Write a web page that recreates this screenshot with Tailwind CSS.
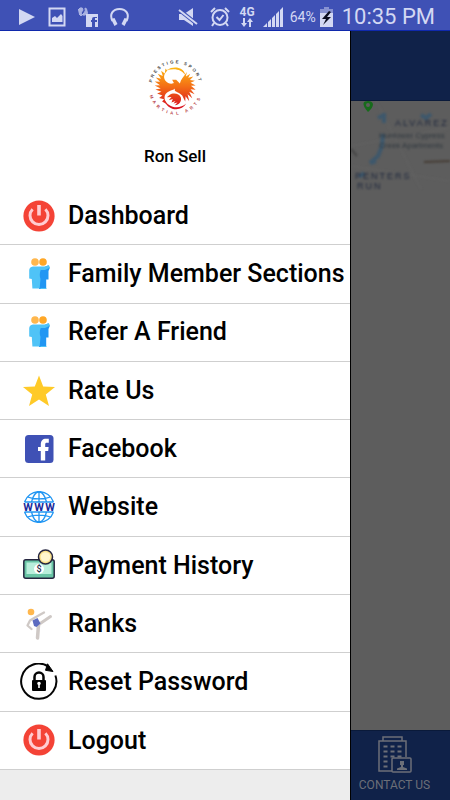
<!DOCTYPE html>
<html lang="en">
<head>
<meta charset="utf-8">
<meta name="viewport" content="width=device-width, initial-scale=1">
<title>Prestige Sport Martial Arts</title>
<script src="https://cdn.jsdelivr.net/npm/@tailwindcss/browser@4"></script>
</head>
<body class="flex h-screen flex-col overflow-hidden bg-white font-['Roboto','Noto_Sans',sans-serif] text-black">

<svg class="hidden" aria-hidden="true">
  <symbol id="power" viewBox="0 0 32 32">
    <circle cx="16" cy="16" r="15.6" fill="#f44336"/>
    <path d="M9.6 9.2A9 9 0 1 0 22.4 9.2" fill="none" stroke="#ffcdd2" stroke-width="3"/>
    <path d="M14.200 5h3.600v10.500h-3.600z" fill="#ffcdd2"/>
  </symbol>
  <symbol id="friends" viewBox="0 0 32 32">
    <circle cx="12" cy="4" r="3.800" fill="#ffb74d"/>
    <circle cx="20" cy="4" r="3.800" fill="#ffa726"/>
    <path d="M16 9h5.500l4-1.800 1.300 2.800-1.300 3v8.500h-2.300v9.500H16z" fill="#2196f3"/>
    <path d="M10 8.500h12l4-1.300.8 2.600-4.800 2.200h-4.300c-1.200 3-1.200 6-.2 9l-.9 9.500H9.400l-.6-9.500-2.600-.5V12.500q0-3.500 3.800-4z" fill="#4fc3f7"/>
    <path d="M17.500 30.500h5.800" stroke="#4fc3f7"/>
  </symbol>
</svg>

<header class="flex h-[31px] shrink-0 items-center border-b border-[#1029ac] bg-[#3f51b5] pt-[3px] pr-[15px] pl-[18px] text-[#d3d8f3]">
  <div class="flex items-center gap-3">
    <svg class="h-[18px] w-[18px]" viewBox="0 0 18 18" fill="currentColor"><path d="M1 1l16 8-16 8z"/></svg>
    <svg class="h-5 w-[18px]" viewBox="0 0 18 20"><path d="M1.500 1.500h15v17h-15z" fill="none" stroke="currentColor" stroke-width="2"/><path d="M4 15v-4l3-2 2 2 4-4 1.500 2v6z" fill="currentColor"/></svg>
    <svg class="h-[22px] w-[20px]" viewBox="0 0 20 22"><path d="M0 4l2-2q3-1 3 2l-2 3q1 3 4 2 4-1 2-4 0-3-2-3 1 3-1 5l-3 3-2-2" fill="#a9b2e2" stroke="#a9b2e2"/><path d="M8 8h12v13h-3v-5h2v-2h-2v-2h2v-1h-3q-2 0-2 2v1h-1v2h1v5H8z" fill="currentColor"/></svg>
    <svg class="h-5 w-[19px]" viewBox="0 0 19 20"><path d="M2.500 14C-1 7 3 2 9.500 2S20 7 16.500 14" fill="none" stroke="currentColor" stroke-width="2"/><path d="M1 12l3.500-1 3 6-3 2zM18 12l-3.500-1-3 6 3 2z" fill="currentColor"/></svg>
  </div>
  <div class="ml-auto flex items-center">
    <svg class="mr-3 h-5 w-5" viewBox="0 0 20 20"><path d="M1 7h5l9-6v18l-9-6H1z" fill="currentColor"/><path d="M0 2l19 15" stroke="#3f51b5" stroke-width="4"/><path d="M1 3l18 14" stroke="currentColor" stroke-width="2"/></svg>
    <svg class="mr-[10px] h-5 w-5" viewBox="0 0 20 20" fill="none" stroke="currentColor" stroke-width="2"><circle cx="10" cy="10.500" r="7.500"/><path d="M6.500 10l3 3 4-5M1 5l4-4M19 5l-4-4M4 16l-2 3M16 16l2 3"/></svg>
    <div class="mr-2 flex flex-col items-center text-xs leading-3 font-bold">
      <span>4G</span>
      <svg class="h-[10px] w-3" viewBox="0 0 12 10" fill="currentColor"><path d="M2 0h2v5h2L3 9 0 5h2zM8 9h2V4h2L9 0 6 4h2z"/></svg>
    </div>
    <svg class="mr-[7px] h-5 w-5" viewBox="0 0 20 20" fill="currentColor"><path d="M0 20l4-4v4zM5 15l3-3v8H5zM9 11l3-3v12H9zM13 7l3-3v16h-3zM17 3l3-3v20h-3z"/></svg>
    <span class="mr-1 text-sm">64%</span>
    <svg class="mr-[9px] h-5 w-[13px]" viewBox="0 0 13 20"><path d="M4 0h5v2h4v5H0V2h4z" fill="#8792d2"/><path d="M0 6h13v14H0z" fill="currentColor"/><path d="M9 4l-7 8h4l-3 6 8-8H7l4-5z" fill="#0a0d20"/></svg>
    <time class="text-[22px] leading-7">10:35 PM</time>
  </div>
</header>

<div class="flex min-h-0 flex-1">
  <aside class="flex w-[350px] shrink-0 flex-col bg-white">
    <div class="flex h-[156px] shrink-0 flex-col items-center pt-[28px]">
      <svg class="h-[57px] w-[57px]" viewBox="5 3 170 170" role="img" aria-label="Prestige Sport Martial Arts">
        <defs>
          <linearGradient id="fire" gradientUnits="userSpaceOnUse" x1="0" y1="28" x2="0" y2="145"><stop offset="0" stop-color="#fdb813"/><stop offset=".5" stop-color="#f36c16"/><stop offset="1" stop-color="#d9131f"/></linearGradient>
          <path id="arcTop" d="M18 88A72 72 0 0 1 162 88"/>
          <path id="arcBottom" d="M9 88A81 81 0 0 0 171 88"/>
        </defs>
        <g class="font-['Liberation_Sans',sans-serif] text-[13px] font-bold tracking-[6px]" text-anchor="middle">
          <text fill="#444"><textPath href="#arcTop" startOffset="50%">PRESTIGE SPORT</textPath></text>
          <text class="tracking-[9px]" fill="#b8434a"><textPath href="#arcBottom" startOffset="50%">MARTIAL ARTS</textPath></text>
        </g>
        <g fill="url(#fire)">
          <path d="M72 34C56 42 52 56 60 68C68 78 80 78 88 74L92 88C84 98 68 96 60 108C54 118 58 130 70 141L50 130L56 123L41 119L51 112L35 106L48 101L30 94L46 91L28 82L44 81L28 70L44 71L31 58L47 62L37 47L52 54L47 38L58 46L60 31L66 38Z"/>
          <path d="M88 80L80 65L92 65L103 76C106 64 114 56 124 42L121 55L134 47L128 59L143 55L133 66L148 68L135 74L150 82L136 83L150 95L135 93L147 108L131 101L140 120L126 108L131 129L120 114L119 130L110 112C100 104 98 104 88 98Z"/>
          <path d="M64 36C86 22 114 28 119 50C108 36 92 29 64 36Z"/>
          <path d="M72 110C84 102 102 106 106 118C109 130 101 140 88 141L96 133L84 136L90 128L78 133L82 122L70 126L78 116L64 117Z"/>
          <path d="M56 122C66 146 98 157 122 136C106 164 62 156 56 122Z"/>
        </g>
      </svg>
      <p class="mt-[30px] text-[17px] leading-5 font-medium">Ron Sell</p>
    </div>

    <nav class="min-h-0 flex-1">
      <ul class="flex h-full flex-col text-[25px] font-medium">
        <li class="flex-1 border-b border-[#cfcfcf]"><a href="#dashboard" class="flex h-full items-center gap-[10px] pl-5">
          <svg class="mx-[3px] h-8 w-8"><use href="#power"/></svg>Dashboard</a></li>
        <li class="flex-1 border-b border-[#cfcfcf]"><a href="#family" class="flex h-full items-center gap-[10px] pl-5 whitespace-nowrap">
          <svg class="mx-[3px] h-8 w-8"><use href="#friends"/></svg>Family Member Sections</a></li>
        <li class="flex-1 border-b border-[#cfcfcf]"><a href="#refer" class="flex h-full items-center gap-[10px] pl-5">
          <svg class="mx-[3px] h-8 w-8"><use href="#friends"/></svg>Refer A Friend</a></li>
        <li class="flex-1 border-b border-[#cfcfcf]"><a href="#rate" class="flex h-full items-center gap-[10px] pl-5">
          <svg class="mx-[3px] h-8 w-8" viewBox="0 0 32 32"><path fill="#ffca28" d="M16 .5l4.200 10.900L32 12l-9.200 7.400L26 31l-10-6.500L6 31l3.200-11.600L0 12l11.800-.6z"/></svg>Rate Us</a></li>
        <li class="flex-1 border-b border-[#cfcfcf]"><a href="#facebook" class="flex h-full items-center gap-[10px] pl-5">
          <svg class="mx-[3px] h-8 w-8" viewBox="0 0 32 32"><rect x="2" y="2" width="28.500" height="28" rx="3.500" fill="#3f51b5"/><path fill="#fff" d="M17.800 27.500V18H15v-4h2.800v-2.500c0-4 2-5.800 5.200-5.800h2.800v4h-2c-1.300 0-1.600.6-1.600 1.900V14h3.400l-.4 4h-3v9.500z"/></svg>Facebook</a></li>
        <li class="flex-1 border-b border-[#cfcfcf]"><a href="#website" class="flex h-full items-center gap-[10px] pl-5">
          <svg class="mx-[3px] h-8 w-8" viewBox="0 0 32 32"><path fill="none" stroke="#2196f3" stroke-width="1.300" d="M1.500 11a15.300 15.300 0 0 1 29 0M1.500 21a15.300 15.300 0 0 0 29 0M16 1v10M16 21v10M8.500 11C10 5 13 1 16 1s6 4 7.500 10M8.500 21c1.500 6 4.500 10 7.500 10s6-4 7.500-10M4.500 6c6 2.500 17 2.500 23 0M4.500 26c6-2.500 17-2.500 23 0M1.500 11h29M1.500 21h29"/><g class="font-['Roboto',sans-serif] text-[11px] font-bold" fill="#1a2a9c" text-anchor="middle"><text x="5" y="20">W</text><text x="16" y="20">W</text><text x="27" y="20">W</text></g></svg>Website</a></li>
        <li class="flex-1 border-b border-[#cfcfcf]"><a href="#payments" class="flex h-full items-center gap-[10px] pl-5">
          <svg class="mx-[3px] h-8 w-8" viewBox="0 0 32 32"><rect x=".8" y="10.800" width="30.400" height="18.400" rx="2" fill="#69c4a5" stroke="#25253f" stroke-width="1.500"/><path d="M3.500 13.500h25v11.500h-25z" fill="#b9eedb"/><circle cx="16" cy="20" r="5" fill="#fff"/><text class="font-['Roboto',sans-serif] text-[9px] font-medium" x="16" y="23" text-anchor="middle" fill="#25253f">$</text><circle cx="22.500" cy="8" r="7" fill="#fae08a" stroke="#25253f" stroke-width="1.500"/><circle cx="22.500" cy="8" r="4.800" fill="#fff5cd"/></svg>Payment History</a></li>
        <li class="flex-1 border-b border-[#cfcfcf]"><a href="#ranks" class="flex h-full items-center gap-[10px] pl-5">
          <svg class="mx-[3px] h-8 w-8" viewBox="0 0 32 32"><g fill="none" stroke="#cfc9c6" stroke-linecap="round" stroke-linejoin="round"><path d="M21 4.500l-9 5-5 3-2.500 5 4 3.500" stroke-width="2.300"/><path d="M27.500 8.500L15 17" stroke-width="3"/><path d="M15.500 17l-1 13" stroke-width="3.500"/></g><circle cx="8" cy="4" r="3.300" fill="#ffb74d"/><path fill="#5c6bc0" d="M9.500 12.500l5-2.500 3 5.500-4 3.500-2.500-1z"/></svg>Ranks</a></li>
        <li class="flex-1 border-b border-[#cfcfcf]"><a href="#reset" class="flex h-full items-center gap-[10px] pl-5 whitespace-nowrap">
          <svg class="h-[38px] w-[38px]" viewBox="0 0 38 38"><path d="M28.500 3.600A17.600 17.600 0 1 0 35.400 12.500" fill="none" stroke="#050505" stroke-width="2"/><path d="M27.500.8l5.500 7.700-7.500-1.200z" fill="#050505" stroke="#050505"/><rect x="12" y="17" width="14" height="11" rx="1"/><path d="M14.500 18v-4a4.500 4.500 0 0 1 9 0v4" fill="none" stroke="#050505" stroke-width="2.500"/><path d="M17.200 20.500a1.800 1.800 0 0 1 3.600 0q0 .8-1 1.400v3h-1.600v-3q-1-.6-1-1.400z" fill="#fff"/></svg>Reset Password</a></li>
        <li class="flex-1 border-b border-[#cfcfcf]"><a href="#logout" class="flex h-full items-center gap-[10px] pl-5">
          <svg class="mx-[3px] h-8 w-8"><use href="#power"/></svg>Logout</a></li>
      </ul>
    </nav>
    <div class="h-[30px] shrink-0 bg-[#ededed]"></div>
  </aside>

  <main class="flex min-w-0 flex-1 flex-col border-l border-black bg-[#5d5d5d]">
    <div class="h-[70px] shrink-0 border-b border-[#0a1a3a] bg-[#102249]"></div>
    <svg class="h-[90px] w-[99px] shrink-0" viewBox="0 0 99 90" role="img" aria-label="Map">
      <g class="blur-[1px]">
        <path d="M0 45l99-18M25 0l45 88M0 65l99 15" stroke="#636363" fill="none"/>
        <path d="M33 12v10M27 17l6-3M32 33l-1 12-4 10-8 7M25 60l-6 2M70 14l5 3 5-4M8 76l5-4" fill="none" stroke="#315672" stroke-width="4" opacity=".7"/>
        <path d="M73 61l26-1" stroke="#463d35" stroke-width="2"/>
        <path d="M0 48l6 7" stroke="#444" stroke-width="2"/>
        <g class="font-['Liberation_Sans',sans-serif] text-[9px]" fill="#20293e">
          <text class="tracking-[2px]" x="44" y="25">ALVAREZ</text>
          <text class="text-[8px]" x="28" y="37" fill="#30383f">Huntower Cypress</text>
          <text class="text-[8px]" x="28" y="47" fill="#30383f">Creek Apartments</text>
          <text class="tracking-[2px]" x="4" y="78">PENTERS</text>
          <text class="tracking-[2px]" x="6" y="88">RUN</text>
        </g>
      </g>
      <path d="M17 11C10 3 12 0 17 0s8 4 0 11z" fill="#176b1b"/><circle cx="17" cy="4" r="2" fill="#5d5d5d"/>
    </svg>
    <div class="flex-1"></div>
    <button type="button" class="flex h-[70px] shrink-0 flex-col items-center border-t border-[#0a1a3a] bg-[#102249] pt-[5px] pr-3 text-xs leading-4 whitespace-nowrap text-[#6c6f78]">
      <svg class="mb-[3px] h-[38px] w-[34px]" viewBox="0 0 34 38" fill="none" stroke="currentColor" stroke-width="1.500"><path d="M14 35H1V5h4V1h19v4h4v16M5 5h19"/><path d="M5.500 10.500h4m3 0h4m3 0h4m-18 5h4m3 0h4m3 0h4m-18 5h4m3 0h4m3 0h4m-18 5h4m-4 5h4" stroke-width="2"/><rect x="14" y="22" width="19" height="14" rx="1"/><path d="M22 25h4v4h-1v2l4 1.500V34H19v-1.500l4-1.500v-2h-1z" fill="currentColor" stroke="none"/></svg>
      CONTACT US
    </button>
  </main>
</div>
</body>
</html>
